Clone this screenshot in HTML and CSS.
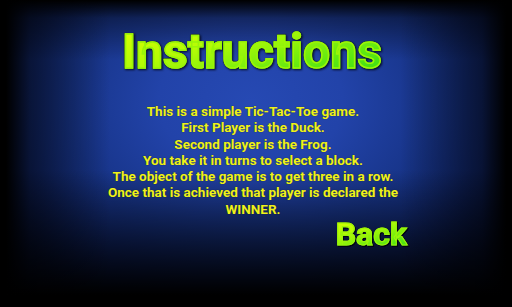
FILE: index.html
```html
<!DOCTYPE html>
<html>
<head>
<meta charset="utf-8">
<link rel="stylesheet" href="styles.css">
</head>
<body>
<main class="screen">
  <h1 class="title">Instructions</h1>
  <div class="body">
    <p>This is a simple Tic-Tac-Toe game.</p>
    <p>First Player is the Duck.</p>
    <p>Second player is the Frog.</p>
    <p>You take it in turns to select a block.</p>
    <p>The object of the game is to get three in a row.</p>
    <p>Once that is achieved that player is declared the</p>
    <p>WINNER.</p>
  </div>
  <div class="actions"><span class="back">Back</span></div>
</main>
</body>
</html>
```
FILE: styles.css
```css
html, body {
  margin: 0;
  padding: 0;
  background: #000;
}
.screen {
  width: 512px;
  height: 307px;
  overflow: hidden;
  box-sizing: border-box;
  padding-top: 27px;
  font-family: Roboto, "Liberation Sans", sans-serif;
  background:
    linear-gradient(to right, #000 0px, #000 6px, rgba(0,0,0,0.55) 30px, rgba(0,0,0,0) 110px, rgba(0,0,0,0) 400px, rgba(0,0,0,0.55) 482px, #000 506px, #000 512px),
    linear-gradient(to bottom, #000 0px, rgba(0,0,0,0.4) 18px, rgba(0,0,0,0) 60px, rgba(0,0,0,0) 170px, rgba(0,0,0,0.6) 245px, #000 295px, #000 307px),
    radial-gradient(ellipse 60% 75% at 49% 33%, #2649b3 0%, #2243a9 30%, #173488 60%, #0c1f62 100%);
  display: flex;
  flex-direction: column;
  align-items: center;
}
.title {
  margin: 0;
  margin-left: -8px;
  font-size: 48px;
  line-height: 50px;
  font-weight: 700;
  letter-spacing: 0.1px;
  background: linear-gradient(165deg, #dcff00 0%, #b4fb06 35%, #5ee811 75%, #30dc16 100%);
  -webkit-background-clip: text;
  background-clip: text;
  color: transparent;
  -webkit-text-stroke: 1.6px #9af508;
  filter: drop-shadow(0 0 0.6px #000a30) drop-shadow(0 0 0.6px #000a30) drop-shadow(1.5px 1.5px 0.8px rgba(0,0,10,0.8));
}
.body {
  margin-top: 26px;
  margin-left: -6px;
  text-align: center;
  color: #eef21c;
  font-size: 13.5px;
  font-weight: 700;
  line-height: 16.3px;
  text-shadow: 0 0 1px rgba(20,20,0,0.7);
}
.body p {
  margin: 0;
}
.actions {
  align-self: stretch;
  display: flex;
  justify-content: flex-end;
  padding-right: 105px;
  margin-top: 1px;
}
.back {
  font-size: 32px;
  line-height: 33px;
  font-weight: 700;
  background: linear-gradient(165deg, #dcff00 0%, #b4fb06 35%, #5ee811 75%, #30dc16 100%);
  -webkit-background-clip: text;
  background-clip: text;
  color: transparent;
  -webkit-text-stroke: 1.1px #9af508;
  filter: drop-shadow(0 0 0.5px #000a30) drop-shadow(1px 1px 0.6px rgba(0,0,10,0.8));
}
```
